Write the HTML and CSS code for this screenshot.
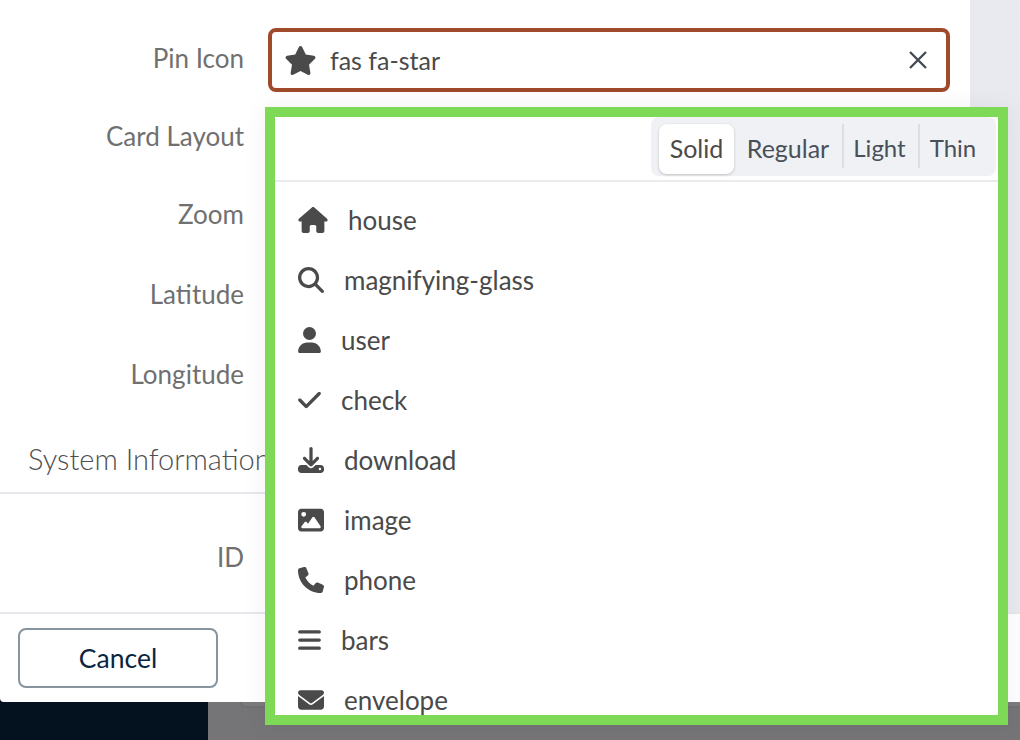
FILE: index.html
```html
<!DOCTYPE html>
<html lang="en">
<head>
<meta charset="utf-8">
<title>Pin Icon</title>
<link rel="stylesheet" href="styles.css">
</head>
<body>
<div class="page">
  <div class="top">
    <div class="form">
      <div class="row row-pin">
        <label class="label">Pin Icon</label>
        <div class="input">
          <svg class="star" viewBox="0 0 576 512"><path d="M316.9 18C311.6 7 300.4 0 288.1 0s-23.4 7-28.8 18L195 150.3 51.4 171.5c-12 1.8-22 10.2-25.7 21.7s-.7 24.2 7.9 32.7L137.800 329 113.2 474.7c-2 12 3 24.2 12.9 31.3s23 8 33.8 2.3l128.3-68.5 128.3 68.5c10.8 5.7 23.9 4.9 33.8-2.3s14.9-19.3 12.9-31.3L438.5 329 542.7 225.9c8.6-8.5 11.7-21.2 7.9-32.7s-13.7-19.9-25.7-21.700L381.2 150.3 316.9 18z"/></svg>
          <span class="value">fas fa-star</span>
          <svg class="clear" viewBox="0 0 22 22"><path d="M3 3 19 19M19 3 3 19"/></svg>
        </div>
      </div>
      <div class="row row-card"><label class="label">Card Layout</label></div>
      <div class="row row-zoom"><label class="label">Zoom</label></div>
      <div class="row row-lat"><label class="label">Latitude</label></div>
      <div class="row row-lng"><label class="label">Longitude</label></div>
      <h3 class="section">System Information</h3>
      <div class="row row-id"><label class="label">ID</label></div>
    </div>
    <div class="side"></div>
  </div>
  <div class="footer">
    <button class="cancel">Cancel</button>
  </div>
  <div class="behind">
    <div class="nav"></div>
    <div class="content"><div class="ghost"></div></div>
  </div>

  <div class="popover">
    <div class="tabs-bar">
      <div class="tabs">
        <span class="tab active">Solid</span>
        <span class="tab tab-regular">Regular</span>
        <span class="sep"></span>
        <span class="tab tab-light">Light</span>
        <span class="sep"></span>
        <span class="tab tab-thin">Thin</span>
      </div>
    </div>
    <ul class="list">
      <li class="item"><svg class="ic i-house" viewBox="0 0 576 512"><path d="M575.8 255.5c0 18-15 32.1-32 32.1h-32l.7 160.2c0 2.7-.2 5.4-.5 8.1V472c0 22.1-17.9 40-40 40H456c-1.1 0-2.2 0-3.3-.1c-1.4.1-2.8.1-4.2.1H416 392c-22.1 0-40-17.9-40-40V448 384c0-17.7-14.3-32-32-32H256c-17.7 0-32 14.3-32 32v64 24c0 22.1-17.9 40-40 40H160 128.1c-1.5 0-3-.1-4.5-.2c-1.2.1-2.4.2-3.6.2H104c-22.1 0-40-17.9-40-40V360c0-.9 0-1.9.1-2.8V287.6H32c-18 0-32-14-32-32.1c0-9 3-17 10-24L266.4 8c7-7 15-8 22-8s15 2 21 7L564.8 231.5c8 7 12 15 11 24z"/></svg><span>house</span></li>
      <li class="item"><svg class="ic i-search" viewBox="0 0 512 512"><path d="M416 208c0 45.900-14.900 88.300-40 122.700L502.600 457.400c12.500 12.500 12.500 32.800 0 45.300s-32.800 12.500-45.300 0L330.700 376c-34.400 25.200-76.800 40-122.700 40C93.100 416 0 322.900 0 208S93.100 0 208 0S416 93.100 416 208zM208 352a144 144 0 1 0 0-288 144 144 0 1 0 0 288z"/></svg><span>magnifying-glass</span></li>
      <li class="item"><svg class="ic i-user" viewBox="0 0 448 512"><path d="M224 256A128 128 0 1 0 224 0a128 128 0 1 0 0 256zm-45.700 48C79.800 304 0 383.800 0 482.300C0 498.700 13.300 512 29.700 512H418.300c16.400 0 29.700-13.300 29.700-29.700C448 383.800 368.200 304 269.700 304H178.300z"/></svg><span>user</span></li>
      <li class="item"><svg class="ic i-check" viewBox="0 0 448 512"><path d="M438.600 105.400c12.500 12.500 12.500 32.800 0 45.300l-256 256c-12.500 12.500-32.800 12.500-45.300 0l-128-128c-12.500-12.500-12.500-32.800 0-45.300s32.800-12.500 45.300 0L160 338.700 393.400 105.400c12.500-12.500 32.800-12.500 45.300 0z"/></svg><span>check</span></li>
      <li class="item"><svg class="ic i-download" viewBox="0 0 512 512"><path d="M288 32c0-17.700-14.300-32-32-32s-32 14.300-32 32V274.700l-73.400-73.400c-12.500-12.500-32.800-12.500-45.300 0s-12.500 32.800 0 45.300l128 128c12.500 12.500 32.800 12.500 45.300 0l128-128c12.500-12.500 12.500-32.800 0-45.300s-32.800-12.500-45.300 0L288 274.700V32zM64 352c-35.300 0-64 28.700-64 64v32c0 35.300 28.700 64 64 64H448c35.300 0 64-28.700 64-64V416c0-35.300-28.700-64-64-64H346.500l-45.300 45.300c-25 25-65.500 25-90.500 0L165.500 352H64zm368 56a24 24 0 1 1 0 48 24 24 0 1 1 0-48z"/></svg><span>download</span></li>
      <li class="item"><svg class="ic i-image" viewBox="0 0 512 512"><path d="M0 96C0 60.700 28.700 32 64 32H448c35.300 0 64 28.700 64 64V416c0 35.300-28.700 64-64 64H64c-35.300 0-64-28.700-64-64V96zM323.800 202.500c-4.500-6.600-11.900-10.500-19.800-10.500s-15.400 3.900-19.800 10.500l-87 127.600L170.700 297c-4.600-5.700-11.500-9-18.700-9s-14.200 3.300-18.700 9l-64 80c-5.800 7.200-6.900 17.100-2.900 25.400S78.800 416 88 416h96 32H424c8.900 0 17.100-4.900 21.200-12.800s3.600-17.400-1.400-24.700l-120-176zM112 192a48 48 0 1 0 0-96 48 48 0 1 0 0 96z" fill-rule="evenodd"/></svg><span>image</span></li>
      <li class="item"><svg class="ic i-phone" viewBox="0 0 512 512"><path d="M164.900 24.600c-7.700-18.600-28-28.500-47.400-23.200l-88 24C12.100 30.200 0 46 0 64C0 311.400 200.600 512 448 512c18 0 33.800-12.100 38.600-29.500l24-88c5.300-19.400-4.600-39.700-23.200-47.400l-96-40c-16.300-6.800-35.200-2.100-46.300 11.600L304.700 368C234.300 334.700 177.300 277.700 144 207.300L193.300 167c13.700-11.200 18.400-30 11.600-46.300l-40-96z"/></svg><span>phone</span></li>
      <li class="item"><svg class="ic i-bars" viewBox="0 0 448 512"><path d="M0 96C0 78.300 14.300 64 32 64H416c17.700 0 32 14.300 32 32s-14.300 32-32 32H32C14.300 128 0 113.700 0 96zM0 256c0-17.700 14.300-32 32-32H416c17.700 0 32 14.300 32 32s-14.300 32-32 32H32c-17.700 0-32-14.300-32-32zM448 416c0 17.700-14.300 32-32 32H32c-17.700 0-32-14.300-32-32s14.300-32 32-32H416c17.700 0 32 14.300 32 32z"/></svg><span>bars</span></li>
      <li class="item"><svg class="ic i-envelope" viewBox="0 0 512 512"><path d="M48 64C21.500 64 0 85.500 0 112c0 15.100 7.100 29.300 19.200 38.400L236.800 313.600c11.400 8.500 27 8.500 38.400 0L492.800 150.400c12.100-9.100 19.200-23.300 19.200-38.400c0-26.500-21.500-48-48-48H48zM0 176V384c0 35.300 28.700 64 64 64H448c35.300 0 64-28.700 64-64V176L294.400 339.200c-22.800 17.100-54 17.100-76.800 0L0 176z"/></svg><span>envelope</span></li>
    </ul>
  </div>
</div>
</body>
</html>
```

FILE: styles.css
```css
* { box-sizing: border-box; }
html, body { margin: 0; padding: 0; }
body { font-family: "Lato", "Open Sans", sans-serif; }

.page {
  position: relative;
  width: 1020px;
  height: 740px;
  overflow: hidden;
  display: flex;
  flex-direction: column;
  background: #04121f;
}

.top { display: flex; height: 612px; flex: none; }
.form { width: 970px; flex: none; background: #fff; overflow: hidden; }
.side { flex: 1; background: #e9eaef; }

.row { display: flex; align-items: center; }
.label {
  width: 244px;
  text-align: right;
  font-size: 26px;
  color: #707070;
  flex: none;
}
.row-pin { height: 97px; padding: 28px 0 5px; }
.row-pin .label { margin-top: -5px; }
.row-card { height: 78px; }
.row-zoom { height: 78px; }
.row-lat { height: 82px; }
.row-lng { height: 78px; }
.row-id { height: 118px; padding-top: 8px; padding-bottom: 0; }

.input {
  margin-left: 24px;
  width: 682px;
  height: 64px;
  border: 4px solid #a04a2c;
  border-radius: 8px;
  display: flex;
  align-items: center;
  padding: 0 17px 0 12px;
}
.star { width: 33px; height: 29px; fill: #4a4a4a; flex: none; }
.value { font-size: 25px; color: #4a4a4a; margin-left: 13px; flex: 1; }
.clear { width: 22px; height: 22px; fill: none; stroke: #454b54; stroke-width: 2.4; flex: none; }

.section {
  margin: 0;
  height: 81px;
  padding: 25px 0 0 28px;
  font-size: 29px;
  font-weight: 300;
  color: #4f4f4f;
  border-bottom: 2px solid #e6e6ec;
  white-space: nowrap;
  line-height: 42px;
}

.footer {
  height: 90px;
  flex: none;
  background: #fff;
  border-top: 2px solid #e6e6ec;
  border-bottom-left-radius: 4px;
  padding: 14px 0 0 18px;
}
.cancel {
  width: 200px;
  height: 60px;
  background: #fff;
  border: 2px solid #85949f;
  border-radius: 8px;
  color: #0a2540;
  font: 400 26.5px "Lato", sans-serif;
}

.behind { flex: 1; display: flex; }
.nav { width: 208px; flex: none; background: #04121f; }
.content { flex: 1; background: #757577; padding-left: 32px; }
.ghost {
  height: 6px;
  background: #7b7b7d;
  border-left: 2px solid #707072;
  border-bottom: 2px solid #707072;
  border-bottom-left-radius: 6px;
}

.popover {
  position: absolute;
  left: 265px;
  top: 107px;
  width: 743px;
  height: 618px;
  border: 10px solid #7ed957;
  background: #fff;
  box-shadow: 0 0 24px rgba(0, 0, 0, .06);
  display: flex;
  flex-direction: column;
}

.tabs-bar {
  height: 65px;
  flex: none;
  border-bottom: 2px solid #ebebee;
  display: flex;
  justify-content: flex-end;
  align-items: flex-start;
}
.tabs {
  margin-right: 2px;
  width: 345px;
  height: 59px;
  background: #f0f1f4;
  border-radius: 8px;
  padding: 7px 0 0 8px;
  display: flex;
  align-items: flex-start;
}
.tab {
  flex: none;
  font-size: 25px;
  line-height: 48px;
  color: #48505a;
  text-align: center;
  height: 50px;
}
.tab.active {
  width: 75px;
  background: #fff;
  border-radius: 8px;
  box-shadow: 0 1px 3px rgba(0, 0, 0, .2);
  color: #4a4a4a;
}
.tab-regular { width: 108px; }
.tab-light { width: 74px; font-size: 24px; padding-right: 3px; }
.tab-thin { width: 66px; font-size: 24px; }
.sep { width: 2px; height: 44px; background: #dcdee4; flex: none; }

.list {
  list-style: none;
  margin: 0;
  padding: 8px 0 0 23px;
  overflow: hidden;
  flex: 1;
}
.item {
  height: 60px;
  display: flex;
  align-items: center;
  font-size: 26px;
  color: #4a4a4a;
  flex: none;
}
.ic { fill: #4a4a4a; flex: none; height: 26px; margin-right: 20px; }
.i-house { width: 30px; }
.i-search { width: 26px; }
.i-user { width: 23px; }
.i-check { width: 23px; }
.i-download { width: 26px; }
.i-image { width: 26px; }
.i-phone { width: 26px; }
.i-bars { width: 23px; }
.i-envelope { width: 26px; }
```
